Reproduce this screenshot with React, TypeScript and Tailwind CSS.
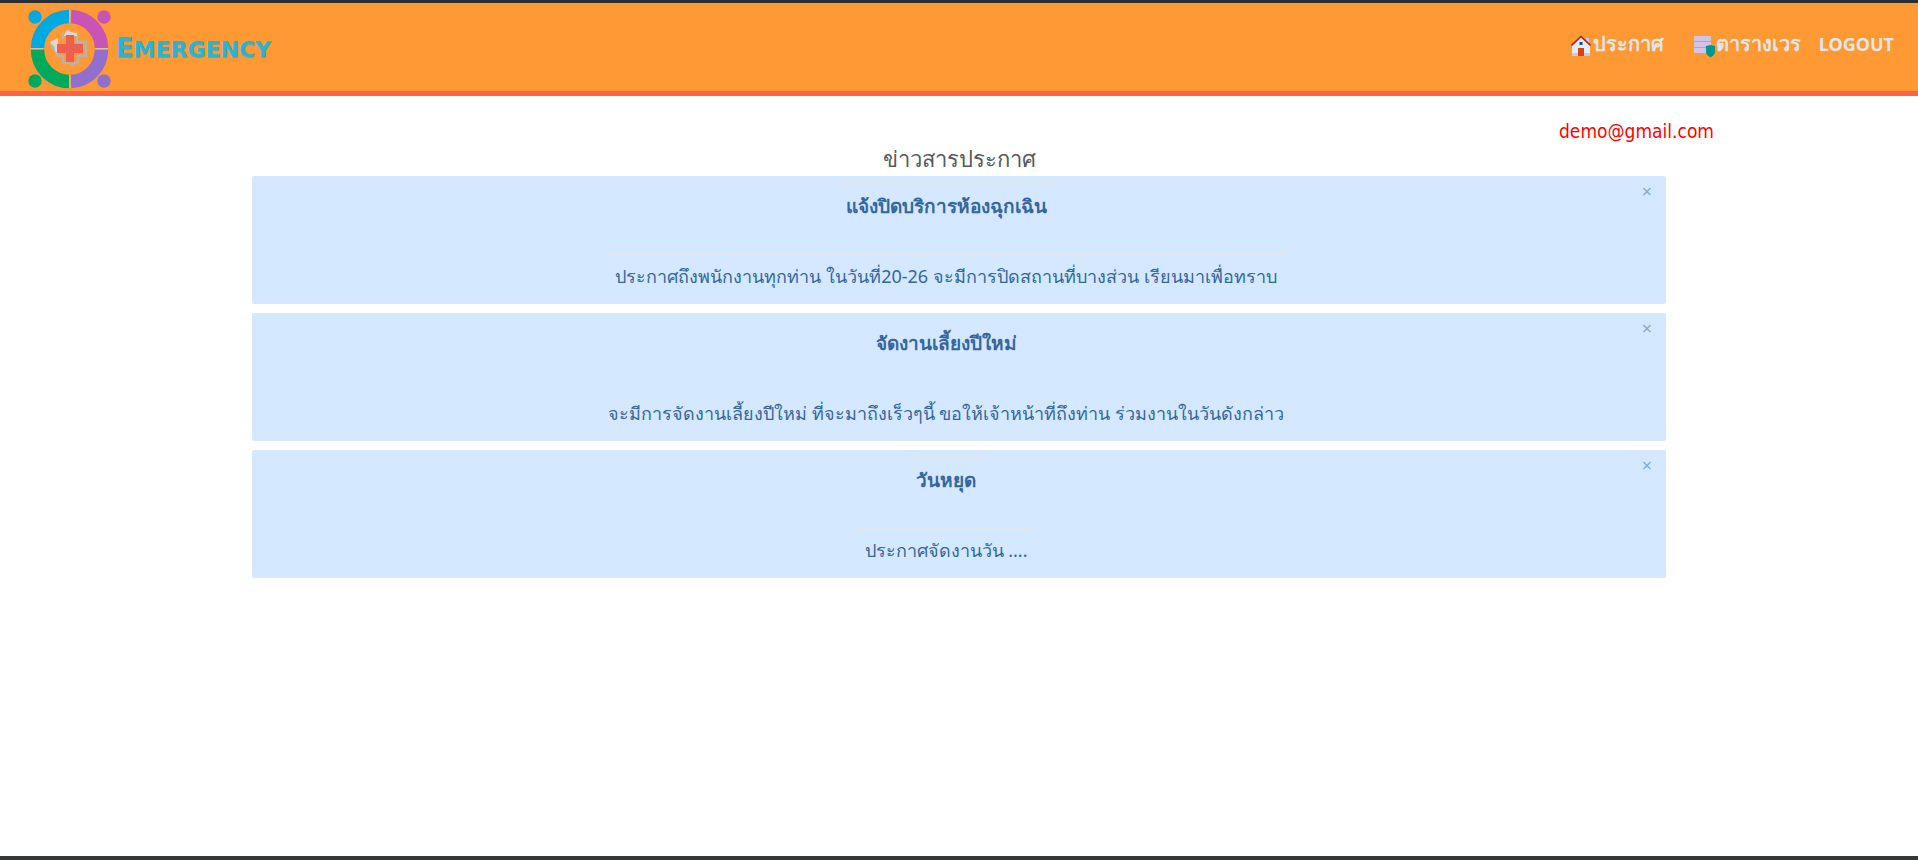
const announcements = [
  { title: 'แจ้งปิดบริการห้องฉุกเฉิน', body: 'ประกาศถึงพนักงานทุกท่าน ในวันที่20-26 จะมีการปิดสถานที่บางส่วน เรียนมาเพื่อทราบ' },
  { title: 'จัดงานเลี้ยงปีใหม่', body: 'จะมีการจัดงานเลี้ยงปีใหม่ ที่จะมาถึงเร็วๆนี้ ขอให้เจ้าหน้าที่ถึงท่าน ร่วมงานในวันดังกล่าว' },
  { title: 'วันหยุด', body: 'ประกาศจัดงานวัน ....' },
];

function LogoMark() {
  return (
    <svg viewBox="0 0 84 80" className="h-20 w-21" aria-hidden="true">
      <g fill="none" strokeWidth="13.5">
        <path d="M9.5 39A32 32 0 0 1 41.5 7.500" stroke="#00a9e0" />
        <path d="M43 7.500A32 32 0 0 1 73.500 39" stroke="#c855b5" />
        <path d="M73.500 40.500A32 32 0 0 1 43 72.500" stroke="#9070cc" />
        <path d="M41.500 72.500A32 32 0 0 1 9.500 40.500" stroke="#00a95c" />
      </g>
      <path d="M41.800 1v13M41.800 66v13M2 39.800h13M67 39.800h13" stroke="#dcc9bb" strokeWidth="1" />
      <circle cx="7" cy="8" r="6.700" fill="#00a9e0" />
      <circle cx="76" cy="8" r="6.700" fill="#c855b5" />
      <circle cx="76" cy="72" r="6.700" fill="#9070cc" />
      <circle cx="7" cy="72" r="6.700" fill="#00a95c" />
      <path d="M35 30v-5h3l3-3 3 3h5v8h9l-2 5h2v9h-8v7h-3l-3 2-3-2h-6v-7h-5l-7-12" fill="none" stroke="#b9b3ad" strokeWidth="2.500" />
      <path d="M22 33l4-2 4-2v16l-3-3-1-5-3-2zM38 22l3-1 1 2 7 1v3H36z" fill="#dcd8d4" />
      <path d="M38 26h8v9h9v9h-9v9h-8v-9h-9v-9h9z" fill="#ee5f50" />
    </svg>
  );
}

function HouseIcon() {
  return (
    <svg viewBox="0 0 20 21" className="h-[21px] w-5" aria-hidden="true">
      <path d="M15 3h3v7h-3z" fill="#c5cae9" />
      <path d="M1 10l9-8 9 8v10H1z" fill="#e8eaf6" />
      <path d="M1 18h18v3H1z" fill="#c5cae9" />
      <path d="M7 13h6v8H7z" fill="#d84315" />
      <path d="M8.500 7h3v3h-3z" fill="#01579b" />
      <path d="M.5 10.500L10 1.500l9.500 9" fill="none" stroke="#b71c1c" strokeWidth="1.600" />
    </svg>
  );
}

function ScheduleIcon() {
  return (
    <svg viewBox="0 0 22 22" className="h-[22px] w-[22px]" aria-hidden="true">
      <rect x="0" y="0" width="17" height="5" rx="1" fill="#d1c4e9" />
      <rect x="0" y="6" width="17" height="5" rx="1" fill="#d1c4e9" />
      <rect x="0" y="12" width="17" height="5" rx="1" fill="#d1c4e9" />
      <path d="M12 10l4.500-1 4.500 1v6c0 2-2 4-4.500 5.500-2.500-1.500-4.500-3.500-4.500-5.500z" fill="#009688" />
    </svg>
  );
}

export default function App() {
  return (
    <div className="flex min-h-screen flex-col border-t-3 border-b-4 border-t-[#2c2f33] border-b-[#35363c] bg-white font-['Noto_Sans',sans-serif]">
      <header className="flex h-[93px] items-start justify-between border-b-5 border-[#ff6347] bg-[#ff9933] pr-6 pl-7">
        <a href="#" className="flex items-center gap-1 pt-1.5">
          <LogoMark />
          <span className="font-['DejaVu_Sans',sans-serif] text-[22px] leading-8 font-bold text-[#27b5d2] [text-shadow:0_1px_0_#8c9795]">
            <span className="text-[26px] leading-8">E</span>MERGENCY
          </span>
        </a>
        <nav className="flex items-center gap-[18px] pt-[25px] text-xl leading-8 font-bold text-[#e4e6e8]">
          <a href="#news" className="mr-3 flex items-end gap-0.5"><span className="pb-1"><HouseIcon /></span><span>ประกาศ</span></a>
          <a href="#schedule" className="flex items-end"><span className="pb-0.5"><ScheduleIcon /></span><span>ตารางเวร</span></a>
          <a href="#logout" className="text-lg leading-8">LOGOUT</a>
        </nav>
      </header>
      <main className="mx-auto w-full max-w-[1414px] pt-5">
        <p className="-mr-12 text-right font-['DejaVu_Sans_Condensed','Noto_Sans',sans-serif] text-[19px] leading-[30px] text-[#f00]">demo@gmail.com</p>
        <h1 className="mb-1.5 text-center text-[22px] leading-6 text-[#55595c]">ข่าวสารประกาศ</h1>
        <div className="flex flex-col gap-[9px]">
          {announcements.map((item) => (
            <section key={item.title} className="relative flex h-32 flex-col items-center rounded-xs bg-[#d4e9ff] pt-2 pr-[26px] text-lg text-[#3566a0]">
              <h2 className="h-[70px] border-t border-[#e0e6ea] px-2 pt-1.5 text-[19px] leading-[30px] font-bold">{item.title}</h2>
              <p className="border-t border-[#e0e6ea] px-2 pt-1.5 leading-[30px]">{item.body}</p>
              <button type="button" aria-label="ปิด" className="absolute top-[7px] right-2.5 px-1 text-lg leading-4 text-[#86a9d3]">×</button>
            </section>
          ))}
        </div>
      </main>
    </div>
  );
}
